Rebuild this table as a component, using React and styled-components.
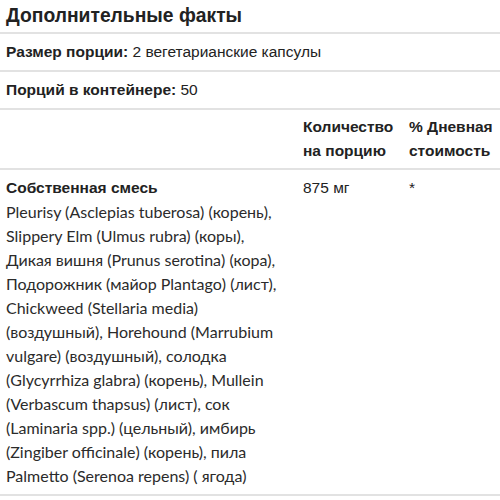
import styled, { createGlobalStyle } from 'styled-components'

const Global = createGlobalStyle`
  body {
    margin: 0;
    background: #fff;
  }
`

const Facts = styled.div`
  width: 500px;
  font-family: "Liberation Sans", Arial, sans-serif;
  color: #222;
`

const Title = styled.h2`
  margin: 0;
  padding: 3px 6px 3px;
  font-size: 19.3px;
  line-height: 26px;
  font-weight: bold;
  border-bottom: 2px solid #e2e2e2;
`

const Row = styled.div`
  display: grid;
  grid-template-columns: ${p => p.$cols || '1fr'};
  border-bottom: 2px solid #e2e2e2;
`

const Cell = styled.div`
  padding: ${p => (p.$tight ? '5px 6px' : '6px 6px')};
  font-size: 15.5px;
  line-height: 24px;
  font-weight: ${p => (p.$bold ? 'bold' : 'normal')};
`

const Label = styled.b`
  font-weight: bold;
`

const Ingredients = styled.div`
  font-family: Lato, "Open Sans", sans-serif;
  font-size: 16px;
  line-height: 24px;
  color: #2b2b2b;
  max-width: 282px;
`

const cols = '297px 106px 1fr'

export default function App() {
  return (
    <>
      <Global />
      <Facts>
        <Title>Дополнительные факты</Title>
        <Row>
          <Cell><Label>Размер порции:</Label> 2 вегетарианские капсулы</Cell>
        </Row>
        <Row>
          <Cell><Label>Порций в контейнере:</Label> 50</Cell>
        </Row>
        <Row $cols={cols}>
          <Cell $tight />
          <Cell $tight $bold>Количество на порцию</Cell>
          <Cell $tight $bold>% Дневная стоимость</Cell>
        </Row>
        <Row $cols={cols}>
          <Cell>
            <Label>Собственная смесь</Label>
            <Ingredients>
              Pleurisy (Asclepias tuberosa) (корень), Slippery Elm (Ulmus rubra) (коры), Дикая вишня (Prunus serotina) (кора), Подорожник (майор Plantago) (лист), Chickweed (Stellaria media) (воздушный), Horehound (Marrubium vulgare) (воздушный), солодка (Glycyrrhiza glabra) (корень), Mullein (Verbascum thapsus) (лист), сок (Laminaria spp.) (цельный), имбирь (Zingiber officinale) (корень), пила Palmetto (Serenoa repens) ( ягода)
            </Ingredients>
          </Cell>
          <Cell>875 мг</Cell>
          <Cell>*</Cell>
        </Row>
      </Facts>
    </>
  )
}
